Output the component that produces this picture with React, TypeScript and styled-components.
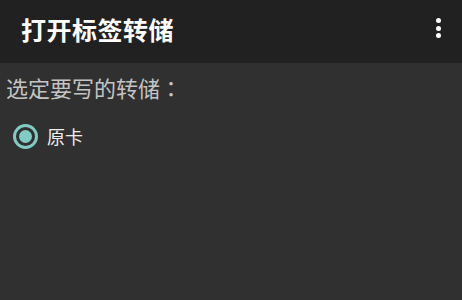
import styled, { createGlobalStyle } from 'styled-components';

const GlobalStyle = createGlobalStyle`
  html, body {
    margin: 0;
    padding: 0;
    background: #303030;
  }
  body {
    font-family: "Noto Sans", "Noto Sans CJK SC", sans-serif;
  }
`;

const Screen = styled.div`
  width: 462px;
  height: 300px;
  background: #303030;
  display: flex;
  flex-direction: column;
  overflow: hidden;
`;

const Toolbar = styled.header`
  height: 63px;
  flex-shrink: 0;
  background: #212121;
  display: flex;
  align-items: center;
  justify-content: space-between;
  padding: 0 14px 0 21px;
  box-sizing: border-box;
`;

const Title = styled.h1`
  margin: 0;
  font-size: 25px;
  font-weight: 700;
  letter-spacing: 0.5px;
  color: #ffffff;
  line-height: 1;
  margin-top: -2px;
`;

const MenuButton = styled.div`
  width: 20px;
  height: 30px;
  display: flex;
  flex-direction: column;
  align-items: center;
  justify-content: center;
  gap: 2.5px;
  margin-top: -7px;
`;

const Dot = styled.span`
  width: 5px;
  height: 5px;
  border-radius: 50%;
  background: #ffffff;
`;

const Content = styled.main`
  padding: 11px 6px 0;
  display: flex;
  flex-direction: column;
`;

const Prompt = styled.div`
  font-family: "Noto Sans CJK TC", "Noto Sans CJK SC", sans-serif;
  font-size: 22px;
  color: #c4c4c4;
  line-height: 26px;
`;

const Option = styled.label`
  display: flex;
  align-items: center;
  gap: 9px;
  margin-top: 24px;
  padding-left: 7px;
`;

const RadioRing = styled.span<{ $checked: boolean }>`
  width: 25px;
  height: 25px;
  box-sizing: border-box;
  border-radius: 50%;
  border: 3px solid ${(p) => (p.$checked ? '#80cbc4' : '#9e9e9e')};
  display: flex;
  align-items: center;
  justify-content: center;

  &::after {
    content: '';
    width: 13px;
    height: 13px;
    border-radius: 50%;
    background: ${(p) => (p.$checked ? '#80cbc4' : 'transparent')};
  }
`;

const OptionText = styled.span`
  font-size: 18px;
  color: #eeeeee;
  line-height: 1;
`;

export default function App() {
  return (
    <Screen>
      <GlobalStyle />
      <Toolbar>
        <Title>打开标签转储</Title>
        <MenuButton>
          <Dot />
          <Dot />
          <Dot />
        </MenuButton>
      </Toolbar>
      <Content>
        <Prompt>选定要写的转储：</Prompt>
        <Option>
          <RadioRing $checked />
          <OptionText>原卡</OptionText>
        </Option>
      </Content>
    </Screen>
  );
}
